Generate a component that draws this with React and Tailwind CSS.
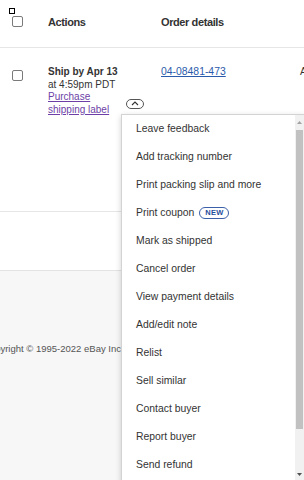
import React from 'react'

const menuItems = [
  'Leave feedback',
  'Add tracking number',
  'Print packing slip and more',
  'Print coupon',
  'Mark as shipped',
  'Cancel order',
  'View payment details',
  'Add/edit note',
  'Relist',
  'Sell similar',
  'Contact buyer',
  'Report buyer',
  'Send refund',
]

function Checkbox() {
  return <div className="w-[11px] h-[11px] rounded-[2px] border border-[#7a7a7a] bg-white" />
}

function ActionMenu() {
  return (
    <div className="absolute left-[121px] top-[114px] w-[184px] h-[380px] bg-white border border-[#d3d3d3] shadow-[0_2px_6px_rgba(0,0,0,0.18)]">
      {menuItems.map((item) => (
        <div key={item} className="h-[28px] flex items-center pl-[14px] text-[10.4px] text-[#333]">
          {item}
          {item === 'Print coupon' && (
            <span className="ml-[5px] h-[12px] px-[5px] flex items-center rounded-full border border-[#3b5fa8] text-[#1f4e9c] text-[7.5px] font-bold tracking-[0.2px]">
              NEW
            </span>
          )}
        </div>
      ))}

      {/* scrollbar */}
      <div className="absolute top-0 right-0 bottom-0 w-[9px] bg-[#f1f1f1] flex flex-col items-center">
        <svg width="5" height="3" viewBox="0 0 5 3" className="mt-[6px]">
          <path d="M0 3 L2.5 0 L5 3 Z" fill="#a3a3a3" />
        </svg>
        <div className="mt-[6px] w-[7px] h-[299px] bg-[#c1c1c1]" />
        <svg width="5" height="3" viewBox="0 0 5 3" className="mt-[44px]">
          <path d="M0 0 L2.5 3 L5 0 Z" fill="#505050" />
        </svg>
      </div>
    </div>
  )
}

export default function App() {
  return (
    <div className="relative w-[304px] h-[480px] overflow-hidden bg-white flex flex-col font-['Liberation_Sans',Arial,sans-serif] text-[#333]">
      {/* header */}
      <div className="h-[48px] shrink-0 flex border-b border-[#e6e6e6]">
        <div className="w-[48px] shrink-0 pl-[9px] pt-[8px]">
          <div className="w-[6px] h-[6px] border border-black" />
          <div className="ml-[3px] mt-[2px]">
            <Checkbox />
          </div>
        </div>
        <div className="w-[113px] shrink-0 pt-[16px] text-[11px] leading-[13px] font-bold tracking-[-0.4px]">Actions</div>
        <div className="pt-[16px] text-[11px] leading-[13px] font-bold tracking-[-0.4px] whitespace-nowrap">Order details</div>
      </div>

      {/* order row */}
      <div className="h-[164px] shrink-0 flex border-b border-[#e6e6e6]">
        <div className="w-[48px] shrink-0 pl-[12px] pt-[22px]">
          <Checkbox />
        </div>
        <div className="w-[113px] shrink-0 pt-[18px] text-[10px] leading-[12.5px]">
          <div className="font-bold">Ship by Apr 13</div>
          <div>at 4:59pm PDT</div>
          <div className="flex items-center">
            <a href="#" className="w-[66px] text-[#6d3fa6] underline">Purchase shipping label</a>
            <button className="ml-[12px] w-[18px] h-[10px] rounded-full border border-[#555] flex items-center justify-center">
              <svg width="8" height="5" viewBox="0 0 8 5">
                <path d="M1 4 L4 1 L7 4" fill="none" stroke="#333" strokeWidth="1.1" />
              </svg>
            </button>
          </div>
        </div>
        <div className="w-[139px] shrink-0 pt-[18px] text-[10.4px] leading-[12.5px]">
          <a href="#" className="text-[#2a5bab] underline">04-08481-473</a>
        </div>
        <div className="pt-[18px] text-[10.4px] leading-[12.5px]">A</div>
      </div>

      <div className="h-[58px] shrink-0" />

      {/* footer */}
      <div className="flex-1 bg-[#f7f7f7] border-t border-[#e3e3e3] pt-[72px]">
        <div className="ml-[-17px] whitespace-nowrap text-[9.5px] leading-[12px] text-[#555]">
          Copyright © 1995-2022 eBay Inc. All Rights Reserved. User Agreement, Privacy, Cookies
        </div>
      </div>

      <ActionMenu />
    </div>
  )
}
